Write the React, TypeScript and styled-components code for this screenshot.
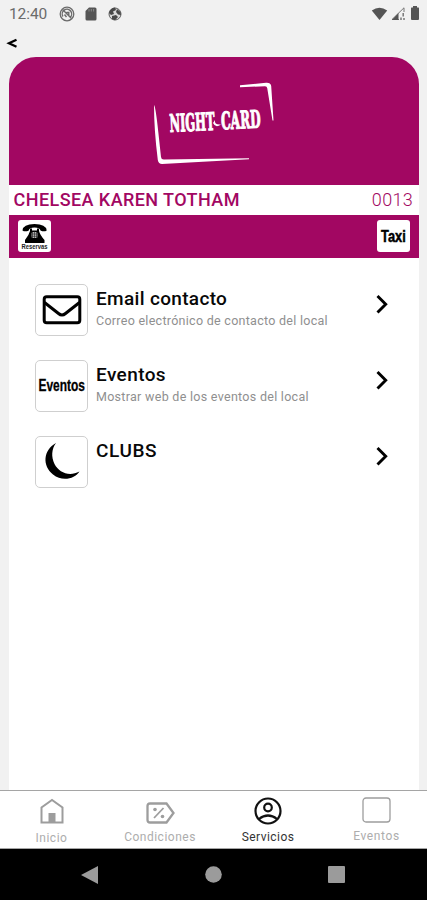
import React from "react";
import styled, { createGlobalStyle } from "styled-components";

const BRAND = "#a20762";

const Global = createGlobalStyle`
  * { box-sizing: border-box; }
  html, body { margin: 0; padding: 0; background: #f1f1f1; }
  body { font-family: Roboto, sans-serif; overflow: hidden; }
  svg { display: block; flex: none; overflow: visible; }
`;

const Screen = styled.div`
  width: 427px;
  height: 900px;
  display: flex;
  flex-direction: column;
  background: #f1f1f1;
`;

const StatusBar = styled.header`
  height: 28px;
  padding: 0 6px 0 9px;
  display: flex;
  align-items: center;
  justify-content: space-between;
  color: #6b6b6b;
`;

const StatusGroup = styled.div<{ $gap: number }>`
  display: flex;
  align-items: center;
  gap: ${(p) => p.$gap}px;
`;

const Clock = styled.span`
  width: 39px;
  font-size: 15.5px;
  line-height: 28px;
  letter-spacing: -0.1px;
  white-space: nowrap;
  margin-right: 3px;
`;

const BackRow = styled.div`
  height: 29px;
  padding: 10px 0 0 7px;
`;

const Card = styled.main`
  flex: 1;
  margin: 0 8px 0 9px;
  display: flex;
  flex-direction: column;
  overflow: hidden;
  border-radius: 27px 27px 0 0;
  background: #fff;
`;

const Banner = styled.div`
  height: 128px;
  padding: 23px 0 0 141px;
  background: ${BRAND};
`;

const NameRow = styled.div`
  height: 30px;
  padding: 0 6px 0 4.5px;
  display: flex;
  align-items: center;
  justify-content: space-between;
  color: ${BRAND};
  font-size: 18px;
  line-height: 30px;
  white-space: nowrap;
`;

const MemberName = styled.span`
  font-weight: 500;
  letter-spacing: 0.43px;
`;

const MemberNumber = styled.span`
  font-weight: 300;
  letter-spacing: 0.3px;
`;

const Strip = styled.div`
  height: 43px;
  padding: 0 9px 1px 9px;
  display: flex;
  align-items: center;
  justify-content: space-between;
  background: ${BRAND};
`;

const Shortcut = styled.button`
  width: 33px;
  height: 32px;
  padding: 0;
  border: 0;
  border-radius: 3px;
  display: grid;
  place-items: center;
  background: #fff;
`;

const List = styled.ul`
  list-style: none;
  margin: 0;
  padding: 26px 0 0 26px;
  display: flex;
  flex-direction: column;
  gap: 24px;
`;

const Row = styled.li`
  height: 52px;
  display: flex;
`;

const Tile = styled.div`
  width: 53px;
  height: 52px;
  flex: none;
  display: grid;
  place-items: center;
  border: 1px solid #cfcfcf;
  border-radius: 5px;
  background: #fff;
`;

const RowText = styled.div`
  width: 272px;
  padding: 3px 0 0 8px;
  white-space: nowrap;
`;

const RowTitle = styled.div<{ $tracking: number }>`
  font-size: 19px;
  font-weight: 500;
  line-height: 24px;
  color: #080808;
  letter-spacing: ${(p) => p.$tracking}px;
`;

const RowNote = styled.div<{ $tracking: number }>`
  font-size: 12.5px;
  line-height: 19px;
  color: #8f8f8f;
  letter-spacing: ${(p) => p.$tracking}px;
`;

const Chevron = styled.div`
  padding: 10px 0 0 16px;
`;

const TabBar = styled.nav`
  height: 59px;
  display: grid;
  grid-template-columns: 103px 113px 104px 107px;
  background: #fff;
  border-top: 1px solid #a5a5a5;
  border-bottom: 1px solid #a5a5a5;
`;

const Tab = styled.button<{ $active?: boolean; $indent?: number }>`
  padding: 0 0 0 ${(p) => p.$indent ?? 0}px;
  border: 0;
  background: none;
  display: flex;
  flex-direction: column;
  align-items: center;
  color: ${(p) => (p.$active ? "#111" : "#9d9d9d")};
`;

const TabIcon = styled.span<{ $top: number; $height?: number }>`
  height: ${(p) => p.$height ?? 38}px;
  padding-top: ${(p) => p.$top}px;
`;

const TabLabel = styled.span<{ $active?: boolean; $tracking?: number }>`
  font: 400 12px/16px Roboto, sans-serif;
  letter-spacing: ${(p) => p.$tracking ?? 0.5}px;
  color: ${(p) => (p.$active ? "#333" : "#adadad")};
`;

const SystemNav = styled.footer`
  height: 51px;
  padding: 0 82px 0 81px;
  display: flex;
  align-items: center;
  justify-content: space-between;
  background: #000;
`;

const CondensedText = styled.text`
  font-family: "Liberation Sans", sans-serif;
  font-weight: 700;
`;

const LogoText = styled.text`
  font-family: "DejaVu Serif Condensed", "DejaVu Serif", serif;
  font-weight: 700;
  font-size: 32px;
  stroke: #fff;
  stroke-width: 1.4px;
`;

const Logo = () => (
  <svg width="126" height="88" viewBox="0 0 126 88" fill="#fff">
    <path d="M4 25 Q5.5 26 8.3 52 L11 77 Q11.3 79.6 14 79.500 L99 78.300 L99 79.300 L62 81.300 L12 84 Q8.500 84 7.800 80 Q4 50 4 25Z" />
    <path d="M90 5.300 L116 2.800 Q120.500 2.400 121.200 6 L123.500 40.500 L122.500 40.500 L117.200 8 Q117 6.200 115 6.200 L90 7.200Z" />
    <g transform="translate(19.500 52) rotate(-2.800) scale(.5 .76)">
      <LogoText x="1" y="0" textLength="90" lengthAdjust="spacingAndGlyphs">NIGHT</LogoText>
      <LogoText x="104" y="0" textLength="79" lengthAdjust="spacingAndGlyphs">CARD</LogoText>
    </g>
    <path d="M65 40 Q64 45 71 44.500 Q65.500 48.500 63 43Z" />
  </svg>
);

const Telephone = () => (
  <svg width="33" height="32" viewBox="0 0 33 32">
    <path d="M4.500 10.500 Q5 4 16.500 4 Q28 4 28.700 10.500 Q26 12.200 22.500 10.500 Q22 7.500 16.500 7.500 Q11 7.500 10.800 10.500 Q7 12.200 4.500 10.500Z" />
    <path d="M12 8.500 H14 V10.500 H19 V8.500 H21 V11 Q22 15 26.500 20 V23 H7 V20 Q11 15 12 11Z" />
    <rect x="13.500" y="12" width="6" height="6" rx="1.500" fill="#bbb" />
    <path d="M14.500 12v6M16.500 11.500v6.500M18.500 12v6M13 14h7M13 16.300h7" stroke="#222" strokeWidth="0.600" />
    <CondensedText x="3.500" y="28.800" fontSize="6.300" textLength="26" lengthAdjust="spacingAndGlyphs" fill="#222">Reservas</CondensedText>
  </svg>
);

const Taxi = () => (
  <svg width="33" height="32" viewBox="0 0 33 32">
    <CondensedText x="0" y="0" transform="translate(4 22) scale(.76 1)" fontSize="16.500" textLength="32.500" lengthAdjust="spacingAndGlyphs" stroke="#000" strokeWidth="0.500">Taxi</CondensedText>
  </svg>
);

const Envelope = () => (
  <svg width="40" height="30" viewBox="0 0 40 30" fill="none" stroke="#000" strokeWidth="3">
    <rect x="2.200" y="1.800" width="35.600" height="26" rx="2.500" />
    <path d="M2.500 7.500 L16.500 18.500 Q20 21.500 23.500 18.500 L37.500 7.500" />
  </svg>
);

const EventsMark = () => (
  <svg width="51" height="28" viewBox="0 0 51 28">
    <CondensedText x="0" y="0" transform="translate(2.500 18.500) scale(.72 1)" fontSize="16.500" textLength="64.500" lengthAdjust="spacingAndGlyphs" stroke="#000" strokeWidth="0.300">Eventos</CondensedText>
  </svg>
);

const Moon = () => (
  <svg width="51" height="50" viewBox="0 0 51 50">
    <path d="M20 6 C7 13 6 29 17 37.500 C26 45 39 42 43.500 34.500 C33 40 23 35.500 18.500 27 C15 20 15.500 12 20 6Z" />
  </svg>
);

const services = [
  { title: "Email contacto", note: "Correo electrónico de contacto del local", icon: <Envelope />, tracking: 0.33, noteTracking: 0.28 },
  { title: "Eventos", note: "Mostrar web de los eventos del local", icon: <EventsMark />, tracking: 0.4, noteTracking: 0.29 },
  { title: "CLUBS", note: "", icon: <Moon />, tracking: 0.6, noteTracking: 0 },
];

export default function App() {
  return (
    <>
      <Global />
      <Screen>
        <StatusBar>
          <StatusGroup $gap={8}>
            <Clock>12:40</Clock>
            <svg width="16" height="16" viewBox="0 0 16 16" fill="none" stroke="currentColor">
              <circle cx="8" cy="8" r="6.800" strokeWidth="1.300" />
              <path d="M4 10.500A4.700 4.700 0 1 1 11 11.500M3.500 3.500l9 9M5.500 8.500l2 2.500M7.500 6.500h2.300v3" strokeWidth="1.400" />
            </svg>
            <svg width="16" height="16" viewBox="0 0 16 16" fill="#555">
              <path d="M6 1.500h6q1.500 0 1.500 1.500v10q0 1.500-1.500 1.500H4q-1.500 0-1.500-1.500V5z" />
              <path d="M6 3v2.500M8.300 3v2.500M10.600 3v2.500" stroke="#888" />
            </svg>
            <svg width="16" height="16" viewBox="0 0 16 16">
              <circle cx="8" cy="8" r="6" fill="#d9d9d9" stroke="#5c5c5c" />
              <path d="M2 7 Q3 2 8 1.500 L9 4 L6 5.500 L7 8 L4 9z M10 3 L13.500 6 L14 9 L11 8.500 L9 6z M5 10 L9 9 L11 11 L8 14.300 L5 13z" fill="#484848" />
            </svg>
          </StatusGroup>
          <StatusGroup $gap={3}>
            <svg width="17" height="15" viewBox="0 0 17 15" fill="#555"><path d="M.8 3.500Q8.500-2 16.200 3.500L8.500 13z" /></svg>
            <svg width="15" height="15" viewBox="0 0 15 15">
              <path d="M1 12.500L13 .8V5M1 12.500H8" fill="none" stroke="#777" />
              <path d="M.8 13L7.500 6V13z" fill="#555" />
              <path d="M12.200 6v3.500M10 10.500v2.500M13 11v2" stroke="#777" strokeWidth="1.500" />
            </svg>
            <svg width="12" height="16" viewBox="0 0 12 16" fill="#555"><path d="M4 0h4v1.500h1.500q.5 0 .5 1V13q0 1-1 1h-6q-1 0-1-1V2.500q0-1 .5-1H4z" /></svg>
          </StatusGroup>
        </StatusBar>
        <BackRow>
          <svg width="11" height="11" viewBox="0 0 11 11" fill="none" stroke="#000" strokeWidth="2.300"><path d="M9.500 1.800L2 5.300L9.500 8.800" /></svg>
        </BackRow>
        <Card>
          <Banner><Logo /></Banner>
          <NameRow>
            <MemberName>CHELSEA KAREN TOTHAM</MemberName>
            <MemberNumber>0013</MemberNumber>
          </NameRow>
          <Strip>
            <Shortcut aria-label="Reservas"><Telephone /></Shortcut>
            <Shortcut aria-label="Taxi"><Taxi /></Shortcut>
          </Strip>
          <List>
            {services.map((s) => (
              <Row key={s.title}>
                <Tile>{s.icon}</Tile>
                <RowText>
                  <RowTitle $tracking={s.tracking}>{s.title}</RowTitle>
                  {s.note && <RowNote $tracking={s.noteTracking}>{s.note}</RowNote>}
                </RowText>
                <Chevron>
                  <svg width="14" height="20" viewBox="0 0 14 20" fill="none" stroke="#000" strokeWidth="2.900"><path d="M1.500 2L9.700 10.200L1.500 18.500" /></svg>
                </Chevron>
              </Row>
            ))}
          </List>
        </Card>
        <TabBar>
          <Tab>
            <TabIcon $top={7} $height={39}>
              <svg width="24" height="26" viewBox="0 0 24 26" fill="none" stroke="currentColor" strokeWidth="2">
                <path d="M1.500 24.500V9.500L12 2L22.500 9.500V24.500z" />
                <path d="M8.500 15h7v9h-7z" fill="currentColor" stroke="none" />
              </svg>
            </TabIcon>
            <TabLabel>Inicio</TabLabel>
          </Tab>
          <Tab $indent={1}>
            <TabIcon $top={11}>
              <svg width="29" height="22" viewBox="0 0 29 22" fill="none" stroke="currentColor" strokeWidth="2.300">
                <path d="M4 1.500H20.500L27.500 11L20.500 20.500H4Q1.500 20.500 1.500 18V4Q1.500 1.500 4 1.500z" />
                <path d="M8 16L17.500 6" strokeWidth="1.800" />
                <circle cx="9" cy="7.500" r="1.800" fill="currentColor" stroke="none" />
                <circle cx="16.500" cy="14.500" r="1.800" fill="currentColor" stroke="none" />
              </svg>
            </TabIcon>
            <TabLabel>Condiciones</TabLabel>
          </Tab>
          <Tab $active>
            <TabIcon $top={6}>
              <svg width="28" height="28" viewBox="0 0 28 28" fill="none" stroke="currentColor" strokeWidth="2.200">
                <circle cx="14" cy="14" r="12.500" />
                <circle cx="14" cy="10.500" r="3.800" />
                <path d="M5 22Q14 15 23 22" />
              </svg>
            </TabIcon>
            <TabLabel $active $tracking={0.45}>Servicios</TabLabel>
          </Tab>
          <Tab $indent={6}>
            <TabIcon $top={6} $height={37}>
              <svg width="29" height="26" viewBox="0 0 29 26" fill="none" stroke="currentColor" strokeWidth="1.300"><rect x="1" y="1" width="27" height="24" rx="3" /></svg>
            </TabIcon>
            <TabLabel $tracking={0.6}>Eventos</TabLabel>
          </Tab>
        </TabBar>
        <SystemNav>
          <svg width="17" height="18" viewBox="0 0 17 18" fill="#9b9b9b"><path d="M17 0V18L0 9z" /></svg>
          <svg width="17" height="17" viewBox="0 0 17 17" fill="#9b9b9b"><circle cx="8.500" cy="8.500" r="8.300" /></svg>
          <svg width="17" height="17" viewBox="0 0 17 17" fill="#9b9b9b"><rect width="17" height="17" rx="1" /></svg>
        </SystemNav>
      </Screen>
    </>
  );
}
